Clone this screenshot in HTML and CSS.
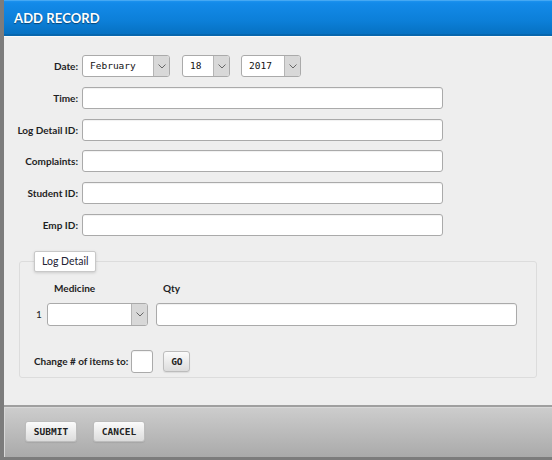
FILE: index.html
```html
<!DOCTYPE html>
<html>
<head>
<meta charset="utf-8">
<title>Add Record</title>
<link rel="stylesheet" href="styles.css">
</head>
<body>
<div class="window">
  <header class="titlebar">ADD RECORD</header>
  <main class="content">
    <div class="form-grid">
      <label class="lbl">Date:</label>
      <div class="date-row">
        <div class="select sel-month"><span class="sel-text">February</span><span class="sel-arrow"><svg width="8" height="5" viewBox="0 0 8 5"><path d="M0.5 0.5 L4 4 L7.5 0.5" fill="none" stroke="#666" stroke-width="1"/></svg></span></div>
        <div class="select sel-day"><span class="sel-text">18</span><span class="sel-arrow"><svg width="8" height="5" viewBox="0 0 8 5"><path d="M0.5 0.5 L4 4 L7.5 0.5" fill="none" stroke="#666" stroke-width="1"/></svg></span></div>
        <div class="select sel-year"><span class="sel-text">2017</span><span class="sel-arrow"><svg width="8" height="5" viewBox="0 0 8 5"><path d="M0.5 0.5 L4 4 L7.5 0.5" fill="none" stroke="#666" stroke-width="1"/></svg></span></div>
      </div>
      <label class="lbl">Time:</label>
      <div class="input wide"></div>
      <label class="lbl">Log Detail ID:</label>
      <div class="input wide"></div>
      <label class="lbl">Complaints:</label>
      <div class="input wide"></div>
      <label class="lbl">Student ID:</label>
      <div class="input wide"></div>
      <label class="lbl">Emp ID:</label>
      <div class="input wide"></div>
    </div>

    <fieldset class="detail">
      <legend class="legend">Log Detail</legend>
      <div class="detail-inner">
        <div class="items">
          <span></span>
          <span class="colhead">Medicine</span>
          <span class="colhead qty-head">Qty</span>
          <span class="num">1</span>
          <div class="select sel-med"><span class="sel-text"></span><span class="sel-arrow"><svg width="8" height="5" viewBox="0 0 8 5"><path d="M0.5 0.5 L4 4 L7.5 0.5" fill="none" stroke="#666" stroke-width="1"/></svg></span></div>
          <div class="input qty"></div>
        </div>
        <div class="change-row">
          <span class="change-lbl">Change # of items to:</span>
          <div class="input small"></div>
          <button class="btn go">GO</button>
        </div>
      </div>
    </fieldset>
  </main>
  <footer class="footer">
    <button class="btn">SUBMIT</button>
    <button class="btn">CANCEL</button>
  </footer>
</div>
</body>
</html>
```

FILE: styles.css
```css
* { box-sizing: border-box; }
html, body { margin: 0; padding: 0; }
body {
  background: #7c7c7c;
  font-family: Lato, "Noto Sans", sans-serif;
  width: 552px;
  height: 460px;
  overflow: hidden;
}
.window {
  margin-left: 4px;
  width: 548px;
  height: 457px;
  display: flex;
  flex-direction: column;
  background: #eeeeee;
}
.titlebar {
  height: 36px;
  flex: none;
  padding: 9px 0 0 10px;
  color: #fff;
  font-weight: 700;
  font-size: 13px;
  letter-spacing: 0.1px;
  text-shadow: 0 1px 1px rgba(0,0,0,0.45);
  background: linear-gradient(#1c92ee 0px, #138ae9 2px, #0c7fd8 20px, #0670c0 34px);
  border-top: 1px solid #45a8f3;
  border-bottom: 2px solid #0766ad;
}
.content {
  flex: 1;
  padding-top: 18px;
  border-top: 1px solid #fafafa;
}
.form-grid {
  display: grid;
  grid-template-columns: 74px 361px;
  column-gap: 4px;
  row-gap: 9.8px;
  grid-auto-rows: 22px;
  align-items: center;
}
.lbl {
  text-align: right;
  font-weight: 700;
  font-size: 10px;
  color: #1e1e24;
}
.date-row {
  display: flex;
  height: 22px;
}
.input {
  height: 22px;
  background: #fff;
  border: 1px solid #aaa;
  border-radius: 3px;
  box-shadow: inset 0 1px 1px rgba(0,0,0,0.06);
}
.select {
  display: flex;
  height: 22px;
  background: #fff;
  border: 1px solid #aaa;
  border-radius: 3px;
  overflow: hidden;
}
.sel-text {
  flex: 1;
  padding: 4px 0 0 7px;
  font-family: "DejaVu Sans Mono", "Liberation Mono", monospace;
  font-size: 9.5px;
  color: #111;
}
.sel-arrow {
  width: 16px;
  flex: none;
  background: #d8d8d8;
  border-left: 1px solid #b5b5b5;
  display: flex;
  align-items: center;
  justify-content: center;
}
.sel-month { width: 88px; }
.sel-day { width: 48px; margin-left: 12px; }
.sel-year { width: 60px; margin-left: 11px; }

.detail {
  margin: 15px 15px 0 15px;
  padding: 0;
  border: 1px solid #dcdcdc;
  border-radius: 3px;
  height: 127px;
}
.legend {
  margin-left: 14px;
  padding: 3px 7px 4px;
  background: #fff;
  border: 1px solid #c8c8c8;
  border-radius: 2px;
  box-shadow: 0 1px 3px rgba(0,0,0,0.15);
  font-size: 10.5px;
  color: #223;
}
.detail-inner {
  padding: 10px 19px 0 16px;
}
.items {
  display: grid;
  grid-template-columns: 11px 101px 369px;
  column-gap: 0;
  row-gap: 7px;
  align-items: center;
}
.items .colhead {
  font-weight: 700;
  font-size: 10px;
  color: #1e1e24;
  padding-left: 7px;
  height: 14px;
}
.items .qty-head { padding-left: 15px; }
.items .qty { margin-left: 8px; width: 361px; }
.num {
  font-size: 10px;
  color: #222;
}
.sel-med { height: 23px; }
.qty { height: 23px; }
.change-row {
  display: flex;
  align-items: center;
  margin-top: 24px;
  margin-left: -2px;
}
.change-lbl {
  font-weight: 700;
  font-size: 10px;
  color: #1e1e24;
  margin-right: 3px;
}
.input.small { width: 22px; height: 23px; }
.btn {
  font-family: "DejaVu Sans Mono", "Liberation Mono", monospace;
  font-weight: 700;
  font-size: 9.5px;
  color: #222;
  height: 21px;
  padding: 0 7px;
  background: linear-gradient(#fbfbfb, #dcdcdc);
  border: 1px solid #bcbcbc;
  border-radius: 3px;
  box-shadow: 0 1px 1px rgba(0,0,0,0.08);
}
.go { margin-left: 10px; width: 27px; padding: 0; }
.footer {
  height: 52px;
  flex: none;
  padding: 14px 0 0 21px;
  display: flex;
  align-items: flex-start;
  gap: 16px;
  border-top: 2px solid #9f9f9f;
  background: linear-gradient(#cdcdcd, #aaaaaa);
  box-shadow: inset 1px 1px 0 #d8d8d8;
}
.footer .btn { width: 52px; padding: 0; }
```
